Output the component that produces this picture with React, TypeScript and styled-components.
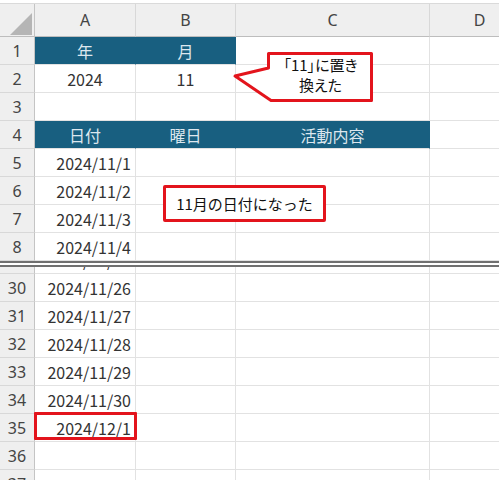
import React from "react";
import styled, { createGlobalStyle } from "styled-components";

const GlobalStyle = createGlobalStyle`
  html, body { margin: 0; padding: 0; background: #ffffff; }
  body { font-family: "Noto Sans CJK JP", "Noto Sans", sans-serif; }
`;

const COLS = "35px 101px 100px 194px 100px";
const TEAL = "#185f80";
const RED = "#e3141c";

const Sheet = styled.div`
  position: relative;
  width: 499px;
  height: 480px;
  padding-top: 3px;
  box-sizing: border-box;
  overflow: hidden;
  background: #fff;
`;

const Grid = styled.div`
  border-top: 1px solid #dadada;
  display: flex;
  flex-direction: column;
`;

const Row = styled.div<{ $h?: number }>`
  display: grid;
  grid-template-columns: ${COLS};
  height: ${(p) => p.$h ?? 28}px;
  flex-shrink: 0;
`;

const ColHead = styled.div<{ $corner?: boolean }>`
  box-sizing: border-box;
  background: #efefef;
  border-right: 1px solid ${(p) => (p.$corner ? "#c4c4c4" : "#d8d8d8")};
  border-bottom: 1px solid #bdbdbd;
  display: flex;
  align-items: center;
  justify-content: center;
  color: #444;
  font-family: "Noto Sans", "Liberation Sans", sans-serif;
  font-size: 16px;
  position: relative;
`;

const Corner = styled.svg`
  position: absolute;
  left: 9px;
  top: 9px;
`;

const RowHead = styled.div`
  box-sizing: border-box;
  background: #efefef;
  border-right: 1px solid #c4c4c4;
  border-bottom: 1px solid #d8d8d8;
  display: flex;
  align-items: center;
  justify-content: center;
  color: #444;
  font-family: "Noto Sans", "Liberation Sans", sans-serif;
  font-size: 16px;
`;

const Cell = styled.div<{ $align?: "center" | "right"; $fill?: boolean }>`
  box-sizing: border-box;
  background: ${(p) => (p.$fill ? TEAL : "#fff")};
  border-right: 1px solid ${(p) => (p.$fill ? TEAL : "#e2e2e2")};
  border-bottom: 1px solid #e2e2e2;
  display: flex;
  align-items: center;
  justify-content: ${(p) => (p.$align === "right" ? "flex-end" : "center")};
  padding: 0 4px;
  color: ${(p) => (p.$fill ? "#dde7ee" : "#333")};
  font-size: 16px;
  line-height: 1;
  white-space: nowrap;
`;

const Divider = styled.div`
  height: 6px;
  box-sizing: border-box;
  border-top: 2px solid #707070;
  border-bottom: 2px solid #707070;
  flex-shrink: 0;
`;

const PartialRow = styled.div<{ $h: number; $from: "top" | "bottom" }>`
  height: ${(p) => p.$h}px;
  overflow: hidden;
  display: flex;
  flex-direction: column;
  justify-content: ${(p) => (p.$from === "bottom" ? "flex-end" : "flex-start")};
  flex-shrink: 0;
`;

const Callout = styled.div`
  position: absolute;
  left: 232px;
  top: 49px;
  width: 144px;
  height: 56px;
  box-sizing: border-box;
  padding: 4px 4px 9px 37px;
  display: flex;
  flex-direction: column;
  align-items: center;
  justify-content: center;
`;

const CalloutShape = styled.svg`
  position: absolute;
  left: 0;
  top: 0;
`;

const CalloutLine = styled.div`
  position: relative;
  font-size: 15px;
  line-height: 20px;
  color: #111;
  white-space: nowrap;
  font-feature-settings: "palt";
`;

const NoteBox = styled.div`
  position: absolute;
  left: 163px;
  top: 185px;
  width: 163px;
  height: 37px;
  box-sizing: border-box;
  border: 3px solid ${RED};
  border-radius: 2px;
  background: #fff;
  display: flex;
  align-items: center;
  justify-content: center;
  font-size: 15px;
  color: #111;
`;

const Highlight = styled.div`
  position: absolute;
  left: 34px;
  top: 412px;
  width: 103px;
  height: 28px;
  box-sizing: border-box;
  border: 3px solid ${RED};
  border-radius: 1px;
`;

type CellSpec = { text?: string; align?: "center" | "right"; fill?: boolean };

const topRows: { n: number; cells: CellSpec[] }[] = [
  { n: 1, cells: [{ text: "年", fill: true }, { text: "月", fill: true }, {}, {}] },
  { n: 2, cells: [{ text: "2024" }, { text: "11" }, {}, {}] },
  { n: 3, cells: [{}, {}, {}, {}] },
  {
    n: 4,
    cells: [
      { text: "日付", fill: true },
      { text: "曜日", fill: true },
      { text: "活動内容", fill: true },
      {},
    ],
  },
  ...[1, 2, 3, 4].map((d, i) => ({
    n: 5 + i,
    cells: [{ text: `2024/11/${d}`, align: "right" as const }, {}, {}, {}],
  })),
];

const dateRow = (n: number, text: string) => ({
  n,
  cells: [{ text, align: "right" as const }, {}, {}, {}] as CellSpec[],
});

const bottomRows = [
  dateRow(30, "2024/11/26"),
  dateRow(31, "2024/11/27"),
  dateRow(32, "2024/11/28"),
  dateRow(33, "2024/11/29"),
  dateRow(34, "2024/11/30"),
  dateRow(35, "2024/12/1"),
  { n: 36, cells: [{}, {}, {}, {}] as CellSpec[] },
];

function SheetRow({ n, cells }: { n: number; cells: CellSpec[] }) {
  return (
    <Row>
      <RowHead>{n}</RowHead>
      {cells.map((c, i) => (
        <Cell key={i} $align={c.align} $fill={c.fill}>
          {c.text}
        </Cell>
      ))}
    </Row>
  );
}

export default function App() {
  return (
    <>
      <GlobalStyle />
      <Sheet>
        <Grid>
          <Row $h={33}>
            <ColHead $corner>
              <Corner width="24" height="22" viewBox="0 0 24 22">
                <polygon points="1,22 23,22 23,0" fill="#b5b5b5" />
              </Corner>
            </ColHead>
            <ColHead>A</ColHead>
            <ColHead>B</ColHead>
            <ColHead>C</ColHead>
            <ColHead>D</ColHead>
          </Row>
          {topRows.map((r) => (
            <SheetRow key={r.n} n={r.n} cells={r.cells} />
          ))}
          <Divider />
          <PartialRow $h={7} $from="bottom">
            <SheetRow n={29} cells={[{ text: "2024/11/25", align: "right" }, {}, {}, {}]} />
          </PartialRow>
          {bottomRows.map((r) => (
            <SheetRow key={r.n} n={r.n} cells={r.cells} />
          ))}
          <PartialRow $h={12} $from="top">
            <SheetRow n={37} cells={[{}, {}, {}, {}]} />
          </PartialRow>
        </Grid>

        <Callout>
          <CalloutShape width="144" height="56" viewBox="0 0 144 56">
            <path
              d="M36.5 4.5 H139.5 V51.5 H39 L3 27 L36.5 19 Z"
              fill="#fff"
              stroke={RED}
              strokeWidth="3"
              strokeLinejoin="round"
            />
          </CalloutShape>
          <CalloutLine>「11」に置き</CalloutLine>
          <CalloutLine>換えた</CalloutLine>
        </Callout>

        <NoteBox>11月の日付になった</NoteBox>
        <Highlight />
      </Sheet>
    </>
  );
}
